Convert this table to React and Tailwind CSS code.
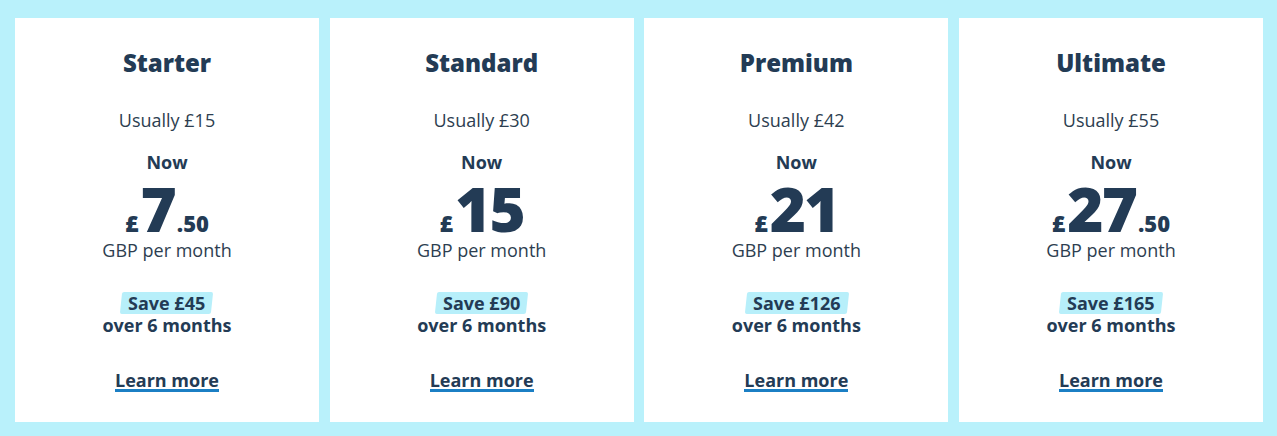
import React from "react";

const plans = [
  { name: "Starter", usual: "£15", whole: "7", dec: ".50", save: "£45" },
  { name: "Standard", usual: "£30", whole: "15", dec: "", save: "£90" },
  { name: "Premium", usual: "£42", whole: "21", dec: "", save: "£126" },
  { name: "Ultimate", usual: "£55", whole: "27", dec: ".50", save: "£165" },
];

function Card({ p }) {
  return (
    <div className="bg-white h-[404px] flex flex-col items-center text-[#233b55]">
      <div className="mt-[30px] text-[24px] font-extrabold leading-[30px]">{p.name}</div>
      <div className="mt-[30px] text-[18px] leading-[24px] text-[#2d3e50]">Usually {p.usual}</div>
      <div className="mt-[18px] text-[18px] font-bold leading-[24px]">Now</div>
      <div className="mt-[4px] h-[60px] flex items-baseline">
        <span className="text-[23px] font-extrabold leading-none mr-[2px]">£</span>
        <span className="text-[62px] font-extrabold leading-[60px] tracking-[-2px]">{p.whole}</span>
        {p.dec && <span className="text-[22px] font-extrabold leading-none ml-[2px]">{p.dec}</span>}
      </div>
      <div className="text-[18px] leading-[24px] text-[#2d3e50]">GBP per month</div>
      <div className="mt-[30px] text-[18px] font-bold leading-[22px]">
        <span className="bg-[#b7effa] px-[7px] inline-block -skew-x-6 rounded-[2px]">
          <span className="inline-block skew-x-6">Save {p.save}</span>
        </span>
      </div>
      <div className="text-[18px] font-bold leading-[22px]">over 6 months</div>
      <a className="mt-[35px] text-[18px] font-bold leading-[18px] border-b-[3px] border-[#1b7fc4]">Learn more</a>
    </div>
  );
}

export default function App() {
  return (
    <div
      className="w-[1277px] h-[436px] bg-[#b9f1fb] pt-[18px] pl-[15px] pr-[14px] grid grid-cols-4 gap-x-[10.67px] items-start"
      style={{ fontFamily: '"Open Sans", sans-serif' }}
    >
      {plans.map((p) => (
        <Card key={p.name} p={p} />
      ))}
    </div>
  );
}
